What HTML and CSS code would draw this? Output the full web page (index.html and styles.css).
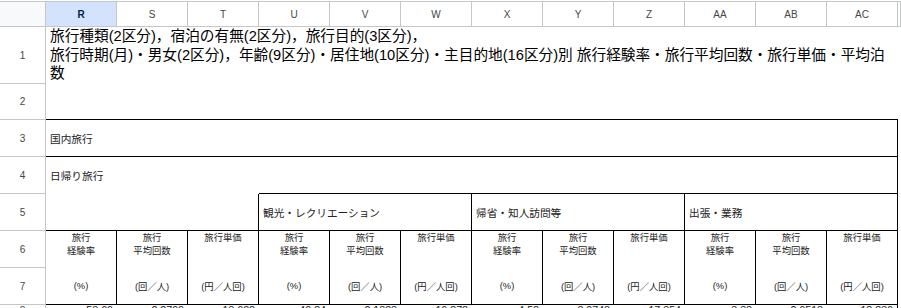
FILE: index.html
```html
<!DOCTYPE html>
<html lang="ja">
<head>
<meta charset="utf-8">
<title>Sheet</title>
<link rel="stylesheet" href="styles.css">
</head>
<body>
<div class="sheet">
  <div class="corner"></div>
  <div class="ch sel">R</div>
  <div class="ch">S</div>
  <div class="ch">T</div>
  <div class="ch">U</div>
  <div class="ch">V</div>
  <div class="ch">W</div>
  <div class="ch">X</div>
  <div class="ch">Y</div>
  <div class="ch">Z</div>
  <div class="ch">AA</div>
  <div class="ch">AB</div>
  <div class="ch">AC</div>
  <div class="ch"></div>

  <div class="rh">1</div>
  <div class="cell title span12">旅行種類(2区分)，宿泊の有無(2区分)，旅行目的(3区分)，<br>旅行時期(月)・男女(2区分)，年齢(9区分)・居住地(10区分)・主目的地(16区分)別 旅行経験率・旅行平均回数・旅行単価・平均泊数</div>
  <div class="fill"></div>

  <div class="rh">2</div>
  <div class="cell span12 bb"></div>
  <div class="fill"></div>

  <div class="rh">3</div>
  <div class="cell lbl span12 bb br">国内旅行</div>
  <div class="fill"></div>

  <div class="rh">4</div>
  <div class="cell lbl span3">日帰り旅行</div>
  <div class="cell span9 bb br"></div>
  <div class="fill"></div>

  <div class="rh">5</div>
  <div class="cell span3 bb br"></div>
  <div class="cell lbl span3 bb br">観光・レクリエーション</div>
  <div class="cell lbl span3 bb br">帰省・知人訪問等</div>
  <div class="cell lbl span3 bb br">出張・業務</div>
  <div class="fill"></div>

  <div class="rh">6</div>
  <div class="cell hd br">旅行<br>経験率</div>
  <div class="cell hd br">旅行<br>平均回数</div>
  <div class="cell hd br">旅行単価</div>
  <div class="cell hd br">旅行<br>経験率</div>
  <div class="cell hd br">旅行<br>平均回数</div>
  <div class="cell hd br">旅行単価</div>
  <div class="cell hd br">旅行<br>経験率</div>
  <div class="cell hd br">旅行<br>平均回数</div>
  <div class="cell hd br">旅行単価</div>
  <div class="cell hd br">旅行<br>経験率</div>
  <div class="cell hd br">旅行<br>平均回数</div>
  <div class="cell hd br">旅行単価</div>
  <div class="fill"></div>

  <div class="rh">7</div>
  <div class="cell unit br bb">(%)</div>
  <div class="cell unit br bb">(回／人)</div>
  <div class="cell unit br bb">(円／人回)</div>
  <div class="cell unit br bb">(%)</div>
  <div class="cell unit br bb">(回／人)</div>
  <div class="cell unit br bb">(円／人回)</div>
  <div class="cell unit br bb">(%)</div>
  <div class="cell unit br bb">(回／人)</div>
  <div class="cell unit br bb">(円／人回)</div>
  <div class="cell unit br bb">(%)</div>
  <div class="cell unit br bb">(回／人)</div>
  <div class="cell unit br bb">(円／人回)</div>
  <div class="fill"></div>

  <div class="rh rh-last">8</div>
  <div class="cell num">53.69</div>
  <div class="cell num">2.2799</div>
  <div class="cell num">13,688</div>
  <div class="cell num">40.84</div>
  <div class="cell num">2.1383</div>
  <div class="cell num">16,878</div>
  <div class="cell num">4.58</div>
  <div class="cell num">3.0743</div>
  <div class="cell num">17,354</div>
  <div class="cell num">3.38</div>
  <div class="cell num">2.6513</div>
  <div class="cell num br">18,836</div>
  <div class="fill"></div>
</div>
</body>
</html>
```

FILE: styles.css
```css
* { box-sizing: border-box; }
html, body { margin: 0; padding: 0; background: #fff; }
body { overflow: hidden; width: 901px; height: 308px; }

.sheet {
  display: grid;
  grid-template-columns: 46px repeat(12, 71px) 1fr;
  grid-template-rows: 26px 57px 36px 37px 37px 37px 37px 37px 40px;
  padding-top: 1px;
  font-family: "Liberation Sans", "Noto Sans CJK JP", sans-serif;
}

.corner {
  background: #f8f9fa;
  border-top: 1px solid #c4c7c5;
  border-bottom: 1px solid #c4c7c5;
  border-right: 1px solid #c4c7c5;
}

.ch {
  display: flex;
  align-items: center;
  justify-content: center;
  font-family: "Liberation Sans", Arial, sans-serif;
  font-size: 10px;
  color: #444746;
  border-top: 1px solid #c4c7c5;
  border-bottom: 1px solid #c4c7c5;
  border-right: 1px solid #c4c7c5;
  background: #fff;
}
.ch.sel {
  background: #d3e3fd;
  color: #041e49;
  font-weight: bold;
}

.rh {
  display: flex;
  align-items: center;
  justify-content: center;
  font-family: "Liberation Sans", Arial, sans-serif;
  font-size: 10px;
  color: #444746;
  border-right: 1px solid #c4c7c5;
  border-bottom: 1px solid #c4c7c5;
}
.rh-last {
  align-items: flex-start;
  line-height: 11px;
}

.cell {
  min-width: 0;
  color: #222;
  font-family: "Liberation Sans", "Noto Sans CJK JP", sans-serif;
}
.span12 { grid-column: span 12; }
.span9 { grid-column: span 9; }
.span3 { grid-column: span 3; }
.bb { border-bottom: 1px solid #000; }
.br { border-right: 1px solid #000; }

.title {
  font-size: 14.67px;
  line-height: 18.5px;
  color: #000;
  padding: 0 3px 0 4px;
}

.lbl {
  display: flex;
  align-items: center;
  font-size: 10.67px;
  padding-left: 4px;
  white-space: nowrap;
}

.hd {
  text-align: center;
  font-size: 9.33px;
  line-height: 13px;
  padding-top: 1px;
}

.unit {
  display: flex;
  align-items: center;
  justify-content: center;
  font-size: 9.33px;
}

.num {
  text-align: right;
  font-size: 10.67px;
  line-height: 11px;
  padding-right: 4px;
  font-family: "Liberation Sans", Arial, sans-serif;
}
```
